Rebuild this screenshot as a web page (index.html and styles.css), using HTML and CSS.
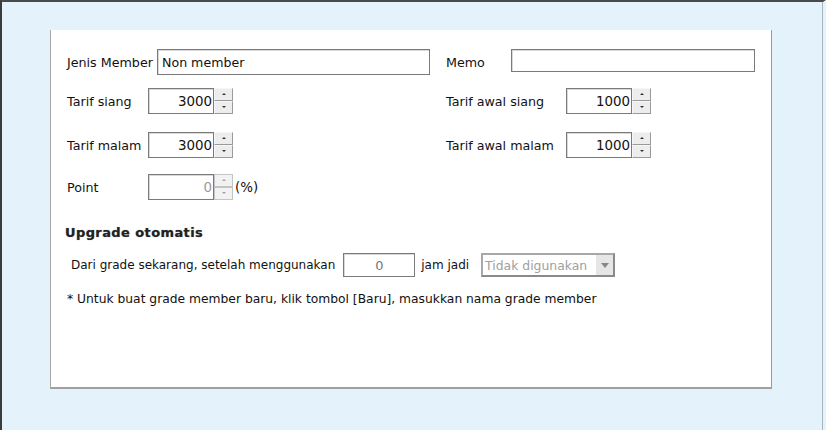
FILE: index.html
```html
<!DOCTYPE html>
<html>
<head>
<meta charset="utf-8">
<link rel="stylesheet" href="styles.css">
</head>
<body>
<div class="screen">
  <div class="panel">
    <div class="row r1">
      <div class="cell left">
        <span class="lbl w90">Jenis Member</span>
        <div class="text big">Non member</div>
      </div>
      <div class="cell">
        <span class="lbl w65">Memo</span>
        <div class="text memo"></div>
      </div>
    </div>
    <div class="row r2">
      <div class="cell left">
        <span class="lbl w81">Tarif siang</span>
        <div class="spin"><div class="spinbox">3000</div><div class="btns"><span class="b up"></span><span class="b dn"></span></div></div>
      </div>
      <div class="cell">
        <span class="lbl w120">Tarif awal siang</span>
        <div class="spin"><div class="spinbox">1000</div><div class="btns"><span class="b up"></span><span class="b dn"></span></div></div>
      </div>
    </div>
    <div class="row r3">
      <div class="cell left">
        <span class="lbl w81">Tarif malam</span>
        <div class="spin"><div class="spinbox">3000</div><div class="btns"><span class="b up"></span><span class="b dn"></span></div></div>
      </div>
      <div class="cell">
        <span class="lbl w120">Tarif awal malam</span>
        <div class="spin"><div class="spinbox">1000</div><div class="btns"><span class="b up"></span><span class="b dn"></span></div></div>
      </div>
    </div>
    <div class="row r4">
      <div class="cell left">
        <span class="lbl w81">Point</span>
        <div class="spin dis"><div class="spinbox">0</div><div class="btns"><span class="b up"></span><span class="b dn"></span></div></div>
        <span class="pct">(%)</span>
      </div>
    </div>
    <div class="heading">Upgrade otomatis</div>
    <div class="uprow">
      <span>Dari grade sekarang, setelah menggunakan</span>
      <div class="hours">0</div>
      <span>jam jadi</span>
      <div class="select"><span class="seltext">Tidak digunakan</span><span class="selbtn"></span></div>
    </div>
    <div class="note">* Untuk buat grade member baru, klik tombol [Baru], masukkan nama grade member</div>
  </div>
</div>
</body>
</html>
```
FILE: styles.css
```css
html, body {
  margin: 0;
  padding: 0;
}
body {
  width: 826px;
  height: 430px;
  overflow: hidden;
  font-family: "DejaVu Sans", sans-serif;
  font-size: 12.4px;
  color: #111;
}
.screen {
  box-sizing: border-box;
  width: 826px;
  height: 430px;
  background: #e4f3fb;
  border-top: 2px solid #4a4a4a;
  border-left: 2px solid #3c3c3c;
  border-right: 3px solid #e4f3fb;
  box-shadow: inset -1px 0 0 #aab6be;
  padding-top: 28px;
  padding-left: 48px;
}
.panel {
  box-sizing: border-box;
  width: 722px;
  height: 359px;
  background: #fff;
  border-left: 1px solid #a8a8a8;
  border-right: 1px solid #9a9a9a;
  border-bottom: 2px solid #a0a0a0;
  padding-top: 19px;
  padding-left: 16px;
}
.row {
  display: flex;
  align-items: center;
}
.cell {
  display: flex;
  align-items: center;
}
.cell.left {
  width: 379px;
}
.r1 { height: 26px; }
.r2 { height: 26px; margin-top: 13px; }
.r3 { height: 26px; margin-top: 18px; }
.r4 { height: 26px; margin-top: 16px; }
.lbl {
  white-space: nowrap;
  font-size: 12.7px;
}
.w90 { width: 90px; }
.w81 { width: 81px; }
.w65 { width: 65px; }
.w120 { width: 120px; }
.text {
  box-sizing: border-box;
  border: 1px solid #7a7a7a;
  box-shadow: inset 1px 1px 0 #d8d8d8;
  background: #fff;
  padding-left: 4px;
  display: flex;
  align-items: center;
  font-size: 12.6px;
}
.big {
  width: 273px;
  height: 26px;
}
.memo {
  width: 244px;
  height: 23px;
  margin-top: -3px;
}
.spin {
  display: flex;
  height: 26px;
}
.spinbox {
  box-sizing: border-box;
  width: 66px;
  height: 26px;
  border: 1px solid #7a7a7a;
  box-shadow: inset 1px 1px 0 #d8d8d8;
  display: flex;
  align-items: center;
  justify-content: flex-end;
  padding-right: 1px;
  font-size: 13.4px;
}
.btns {
  display: flex;
  flex-direction: column;
  width: 19px;
  height: 26px;
}
.b {
  box-sizing: border-box;
  height: 13px;
  background: #ededed;
  border: 1px solid #9a9a9a;
  border-top-color: #f6f6f6;
  border-left-color: #f6f6f6;
  position: relative;
}
.b::after {
  content: "";
  position: absolute;
  left: 7px;
  top: 4px;
  border-left: 2px solid transparent;
  border-right: 2px solid transparent;
}
.up::after { border-bottom: 2px solid #333; }
.dn::after { border-top: 2px solid #333; }
.dis .spinbox { color: #9a9a9a; }
.dis .b { background: #f2f2f2; border-color: #c4c4c4; }
.dis .up::after { border-bottom-color: #a0a0a0; }
.dis .dn::after { border-top-color: #a0a0a0; }
.pct {
  margin-left: 2px;
  font-size: 13.4px;
}
.heading {
  margin-top: 25px;
  margin-left: -2px;
  font-weight: bold;
  font-size: 13px;
  letter-spacing: 0.4px;
  line-height: 16px;
  color: #222;
  text-shadow: 0 0 1px #888;
}
.uprow {
  display: flex;
  align-items: center;
  height: 24px;
  margin-top: 12px;
  margin-left: 4px;
  font-size: 12px;
}
.hours {
  box-sizing: border-box;
  width: 72px;
  height: 24px;
  margin: 0 6px 0 8px;
  border: 1px solid #7a7a7a;
  box-shadow: inset 1px 1px 0 #d8d8d8;
  display: flex;
  align-items: center;
  justify-content: center;
  color: #777;
  font-size: 13px;
}
.select {
  box-sizing: border-box;
  width: 134px;
  height: 24px;
  margin-left: 12px;
  border: 2px solid #8a8a8a;
  border-top-color: #a8a8a8;
  border-left-color: #a8a8a8;
  display: flex;
  align-items: center;
  justify-content: space-between;
  padding-left: 2px;
}
.seltext {
  color: #a0a0a0;
  font-size: 12.4px;
}
.selbtn {
  width: 17px;
  height: 20px;
  background: #e6e6e6;
  position: relative;
}
.selbtn::after {
  content: "";
  position: absolute;
  left: 5px;
  top: 8px;
  border-left: 4px solid transparent;
  border-right: 4px solid transparent;
  border-top: 5px solid #888;
}
.note {
  margin-top: 14px;
  line-height: 16px;
  font-size: 12.3px;
}
```
